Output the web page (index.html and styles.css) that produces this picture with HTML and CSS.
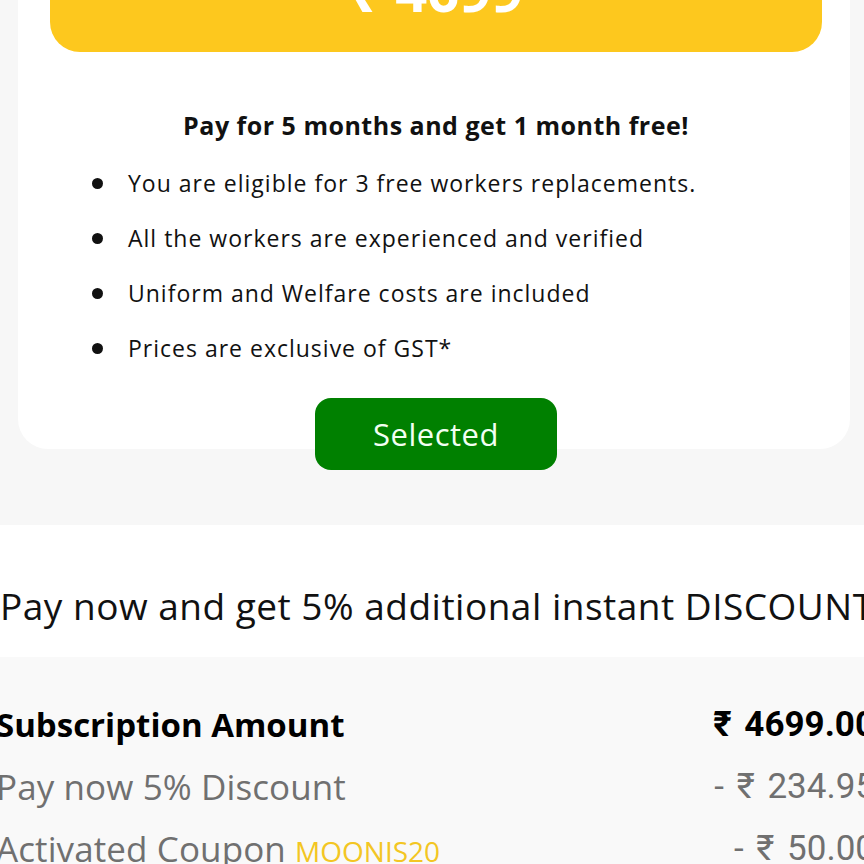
FILE: index.html
```html
<!DOCTYPE html>
<html lang="en">
<head>
<meta charset="utf-8">
<title>Plan</title>
<link rel="stylesheet" href="styles.css">
</head>
<body>
<div class="plan-wrap">
  <div class="card">
    <div class="price-box">
      <div class="price">₹ 4699</div>
    </div>
    <h3 class="offer">Pay for 5 months and get 1 month free!</h3>
    <ul class="features">
      <li>You are eligible for 3 free workers replacements.</li>
      <li>All the workers are experienced and verified</li>
      <li>Uniform and Welfare costs are included</li>
      <li>Prices are exclusive of GST*</li>
    </ul>
    <div class="action">
      <button class="selected">Selected</button>
    </div>
  </div>
</div>
<section class="promo">
  <p class="promo-text">Pay now and get 5% additional instant DISCOUNT</p>
</section>
<section class="summary">
  <div class="row total">
    <span class="label">Subscription Amount</span>
    <span class="value">₹ 4699.00</span>
  </div>
  <div class="row muted">
    <span class="label">Pay now 5% Discount</span>
    <span class="value">- ₹ 234.95</span>
  </div>
  <div class="row muted">
    <span class="label">Activated Coupon <span class="coupon">MOONIS20</span></span>
    <span class="value">- ₹ 50.00</span>
  </div>
</section>
</body>
</html>
```
FILE: styles.css
```css
html, body {
  margin: 0;
  padding: 0;
}
body {
  background: #f7f7f7;
  font-family: "Open Sans", "Noto Sans", sans-serif;
  color: #111;
  overflow: hidden;
  width: 864px;
}
.plan-wrap {
  padding: 0 14px 0 18px;
}
.card {
  display: flow-root;
  margin-top: -80px;
  background: #fff;
  border-radius: 30px;
  padding: 0 28px 0 32px;
}
.price-box {
  height: 132px;
  background: #fdc81e;
  border-radius: 0 0 30px 30px;
  display: flex;
  justify-content: center;
  align-items: flex-end;
}
.price {
  color: #fff;
  font-weight: 700;
  font-size: 56px;
  line-height: 56px;
  margin-bottom: 34px;
}
.offer {
  margin: 57px 0 0;
  text-align: center;
  font-size: 25px;
  line-height: 32px;
  font-weight: 700;
  letter-spacing: 0.5px;
  color: #111;
}
.features {
  list-style: none;
  margin: 27px 0 0;
  padding: 0 0 0 42px;
}
.features li {
  position: relative;
  font-size: 23px;
  line-height: 30px;
  letter-spacing: 1px;
  margin-bottom: 25px;
  padding-left: 36px;
  color: #111;
}
.features li:last-child {
  margin-bottom: 0;
}
.features li::before {
  content: "";
  position: absolute;
  left: 0;
  top: 10px;
  width: 11px;
  height: 11px;
  border-radius: 50%;
  background: #111;
}
.action {
  display: flex;
  justify-content: center;
  margin-top: 35px;
  margin-bottom: -21px;
}
.selected {
  width: 242px;
  height: 72px;
  background: #008000;
  color: #f2fff2;
  border: none;
  border-radius: 16px;
  font-family: inherit;
  font-size: 31px;
  font-weight: 500;
  letter-spacing: 0.5px;
}
.promo {
  margin-top: 76px;
  background: #fff;
  height: 132px;
  box-sizing: border-box;
  padding-top: 59px;
}
.promo-text {
  margin: 0;
  white-space: nowrap;
  font-size: 37px;
  line-height: 44px;
  letter-spacing: 0.5px;
  color: #111;
}
.summary {
  background: #f9f9f9;
  padding: 36px 0 0;
  margin: 0 -11px 0 -4px;
}
.row {
  display: flex;
  justify-content: space-between;
  align-items: center;
  height: 62px;
  white-space: nowrap;
}
.label {
  font-size: 35px;
  letter-spacing: 0.1px;
}
.total .label {
  font-size: 33px;
  letter-spacing: 0;
  font-weight: 700;
  color: #000;
}
.value {
  font-family: Roboto, "Noto Sans", sans-serif;
  font-size: 35px;
  word-spacing: 4px;
}
.total .value {
  font-weight: 700;
  color: #000;
}
.muted {
  color: #707070;
}
.coupon {
  color: #f3c623;
  font-size: 28px;
  letter-spacing: 0;
}
```
